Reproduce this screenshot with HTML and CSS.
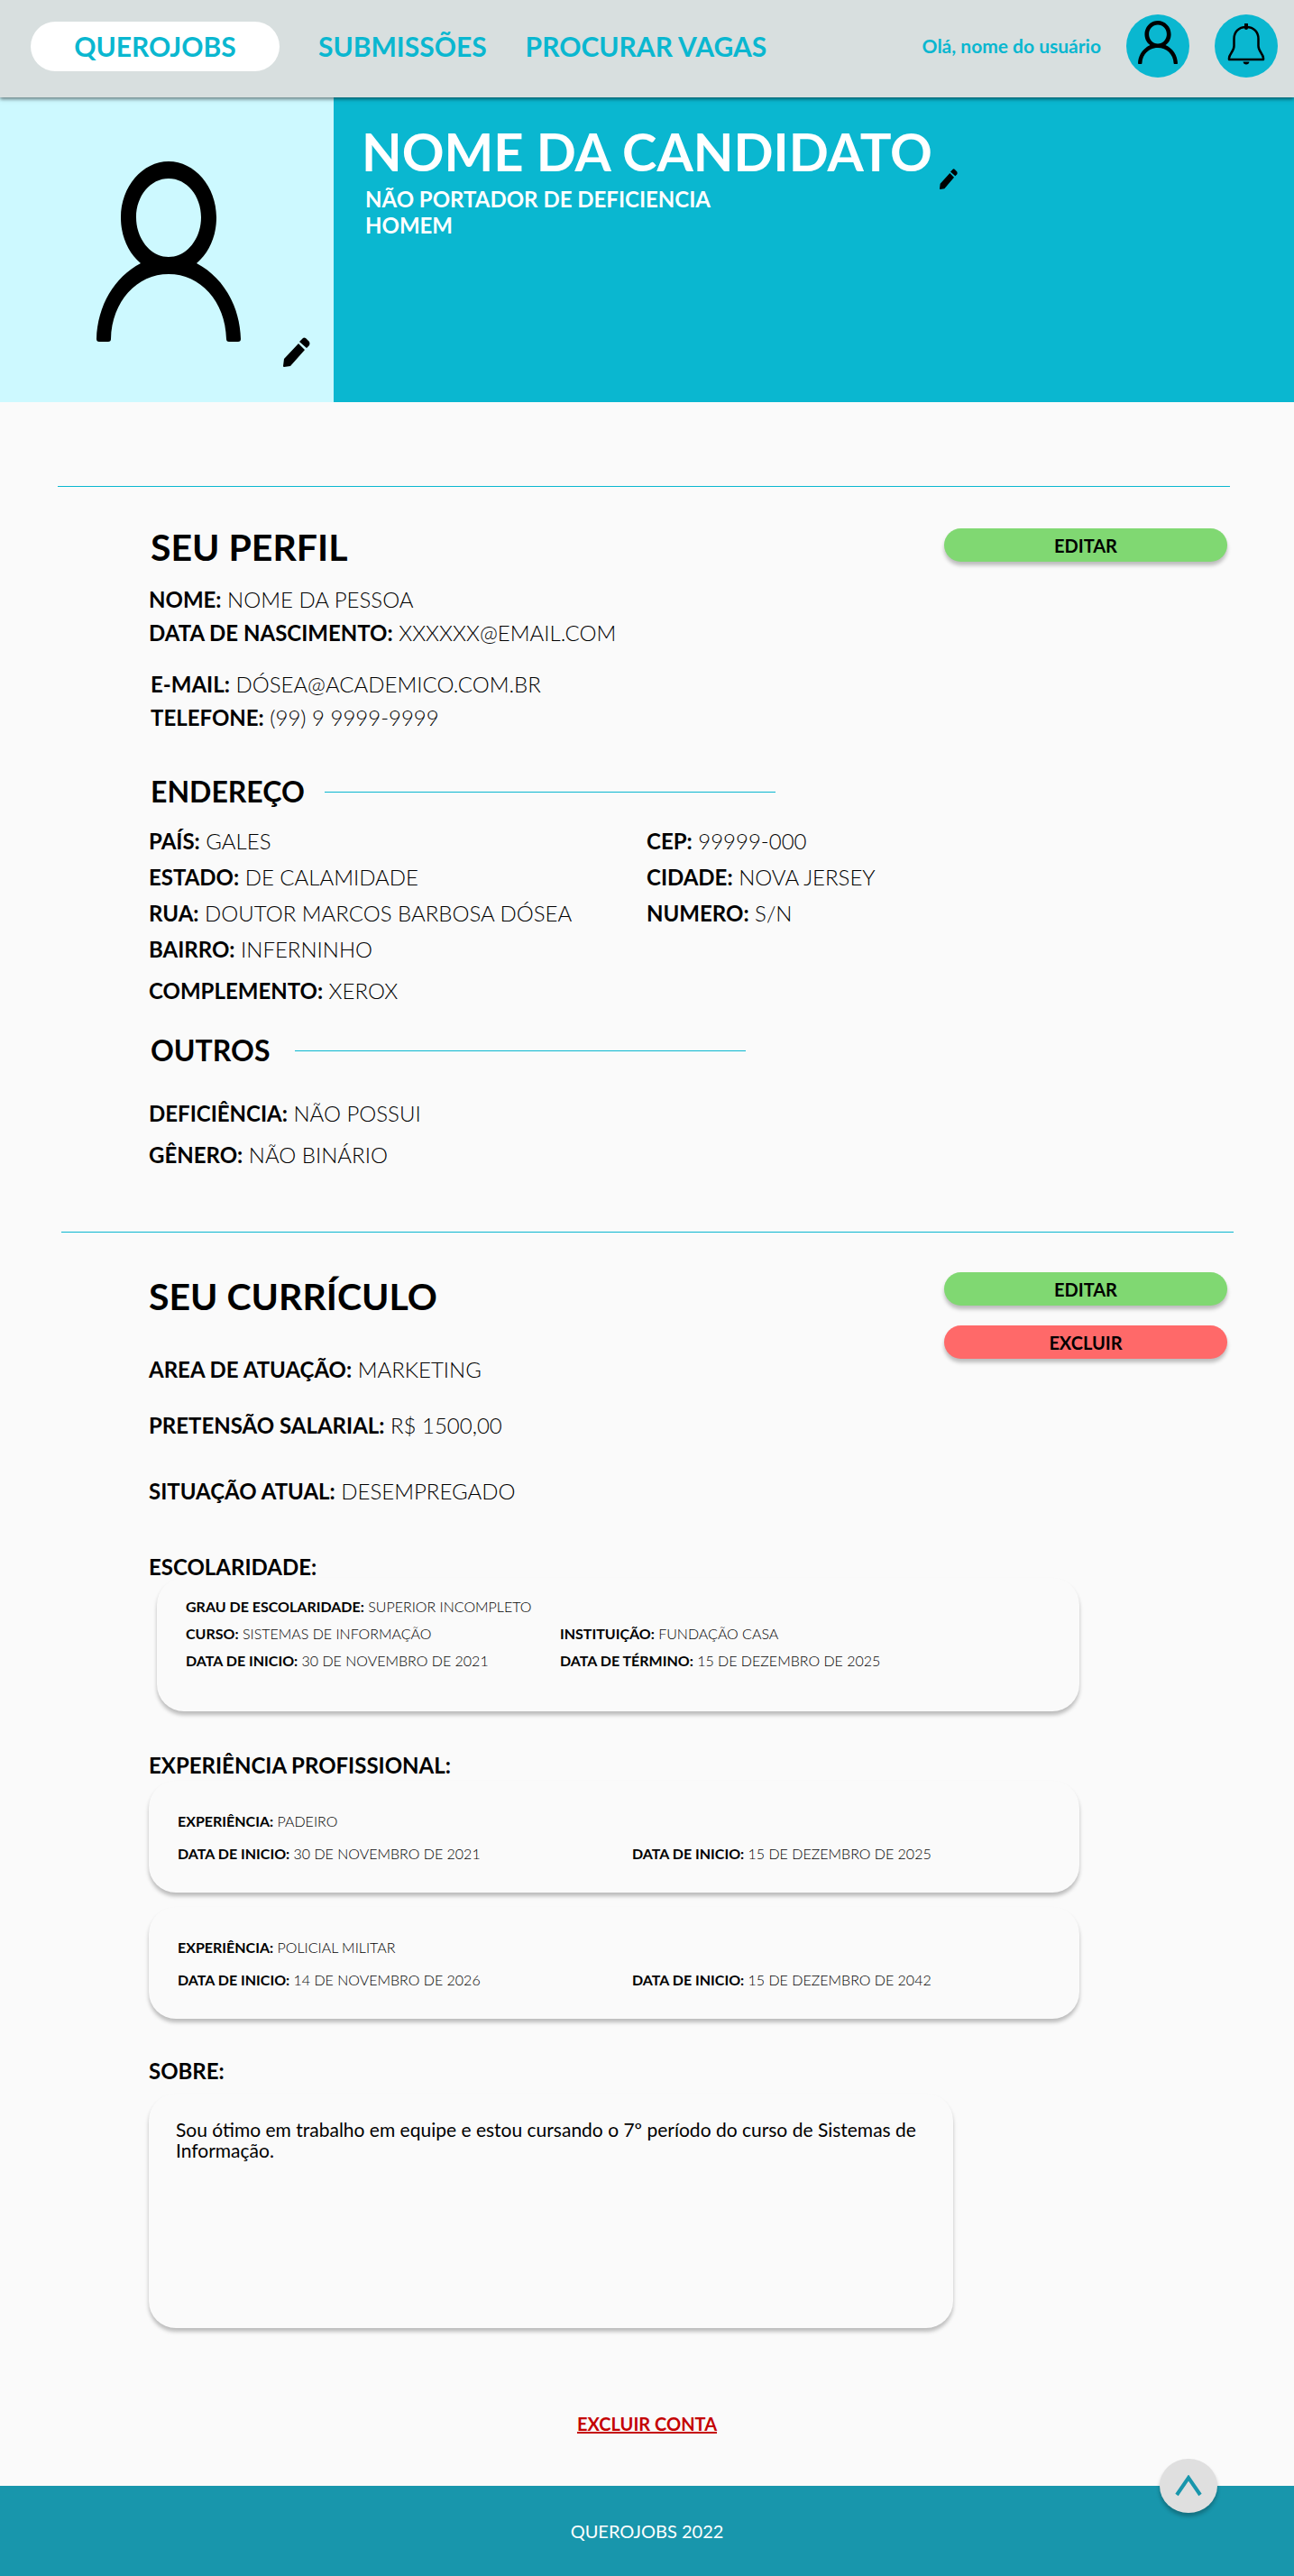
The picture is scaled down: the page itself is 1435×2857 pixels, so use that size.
FILE: index.html
```html
<!DOCTYPE html>
<html lang="pt-BR">
<head>
<meta charset="utf-8">
<meta name="viewport" content="width=device-width, initial-scale=1">
<title>QueroJobs - Perfil do candidato</title>
<link rel="stylesheet" href="styles.css">
</head>
<body>
<svg class="sprite" aria-hidden="true">
  <symbol id="icon-person" viewBox="0 0 160 200" preserveAspectRatio="none">
    <path fill="currentColor" fill-rule="evenodd" d="M80 0C109 0 133 28 133 62C133 83 125 101 111 113C140 128 159 160 160 197Q160 200 157 200H147Q144 200 144 197C143 155 115 125 80 125S17 155 16 197Q16 200 13 200H3Q0 200 0 197C1 160 20 128 49 113C35 101 27 83 27 62C27 28 51 0 80 0ZM80 19C60 19 44 38 44 62S60 106 80 106S116 86 116 62S100 19 80 19Z"/>
  </symbol>
  <symbol id="icon-pencil" viewBox="0 0 30 33" preserveAspectRatio="none">
    <path d="M17 7L24 14L8 32L1 33Q0 33 0 32L1 24ZM18 5L22 1Q23 0 25 1L29 5Q30 7 29 9L26 12Z" fill="currentColor"/>
  </symbol>
</svg>

<header class="topbar" id="top">
  <nav class="nav">
    <a class="brand" href="#top">QUEROJOBS</a>
    <a class="nav-link" href="#submissoes">SUBMISSÕES</a>
    <a class="nav-link" href="#vagas">PROCURAR VAGAS</a>
  </nav>
  <div class="user">
    <span class="greeting">Olá, nome do usuário</span>
    <button class="round" type="button" aria-label="Minha conta">
      <svg class="round-person"><use href="#icon-person"/></svg>
    </button>
    <button class="round" type="button" aria-label="Notificações">
      <svg class="round-bell" viewBox="0 0 42 46" fill="none" stroke="currentColor">
        <path d="M21 4C12 4 7.500 10 7.500 17V25C7.500 31 2 34 2 38.500V40H40V38.500C40 34 34.500 31 34.500 25V17C34.500 10 30 4 21 4Z" stroke-width="2.500" stroke-linejoin="round"/>
        <path d="M21 5V1" stroke-width="4" stroke-linecap="round"/>
        <path d="M17.500 42.500H24.500Q24 45.500 21 45.500T17.500 42.500Z" fill="currentColor" stroke="none"/>
      </svg>
    </button>
  </div>
</header>

<section class="hero">
  <div class="photo">
    <svg class="photo-person"><use href="#icon-person"/></svg>
    <button class="pencil pencil-photo" type="button" aria-label="Editar foto"><svg><use href="#icon-pencil"/></svg></button>
  </div>
  <div class="identity">
    <div class="name-row">
      <h1>NOME DA CANDIDATO</h1>
      <button class="pencil pencil-name" type="button" aria-label="Editar nome"><svg><use href="#icon-pencil"/></svg></button>
    </div>
    <p class="tagline">NÃO PORTADOR DE DEFICIENCIA<br>HOMEM</p>
  </div>
</section>

<main>
  <hr class="divider divider-profile">
  <section class="section profile">
    <div class="section-head">
      <h2>SEU PERFIL</h2>
      <div class="actions"><button class="btn btn-edit" type="button">EDITAR</button></div>
    </div>
    <div class="fields">
      <p><b>NOME:</b> NOME DA PESSOA</p>
      <p><b>DATA DE NASCIMENTO:</b> XXXXXX@EMAIL.COM</p>
    </div>
    <div class="fields contact">
      <p><b>E-MAIL:</b> DÓSEA@ACADEMICO.COM.BR</p>
      <p><b>TELEFONE:</b> (99) 9 9999-9999</p>
    </div>

    <h3 class="rule-title address-title">ENDEREÇO</h3>
    <div class="address">
      <p><b>PAÍS:</b> GALES</p>
      <p><b>CEP:</b> 99999-000</p>
      <p><b>ESTADO:</b> DE CALAMIDADE</p>
      <p><b>CIDADE:</b> NOVA JERSEY</p>
      <p><b>RUA:</b> DOUTOR MARCOS BARBOSA DÓSEA</p>
      <p><b>NUMERO:</b> S/N</p>
      <p><b>BAIRRO:</b> INFERNINHO</p>
    </div>
    <p class="complement"><b>COMPLEMENTO:</b> XEROX</p>

    <h3 class="rule-title others-title">OUTROS</h3>
    <div class="others">
      <p><b>DEFICIÊNCIA:</b> NÃO POSSUI</p>
      <p><b>GÊNERO:</b> NÃO BINÁRIO</p>
    </div>
  </section>

  <hr class="divider divider-resume">
  <section class="section resume">
    <div class="section-head">
      <h2>SEU CURRÍCULO</h2>
      <div class="actions">
        <button class="btn btn-edit" type="button">EDITAR</button>
        <button class="btn btn-delete" type="button">EXCLUIR</button>
      </div>
    </div>
    <p><b>AREA DE ATUAÇÃO:</b> MARKETING</p>
    <p class="salary"><b>PRETENSÃO SALARIAL:</b> R$ 1500,00</p>
    <p class="status"><b>SITUAÇÃO ATUAL:</b> DESEMPREGADO</p>

    <h4 class="school-title">ESCOLARIDADE:</h4>
    <div class="card school">
      <p class="wide"><b>GRAU DE ESCOLARIDADE:</b> SUPERIOR INCOMPLETO</p>
      <p><b>CURSO:</b> SISTEMAS DE INFORMAÇÃO</p>
      <p><b>INSTITUIÇÃO:</b> FUNDAÇÃO CASA</p>
      <p><b>DATA DE INICIO:</b> 30 DE NOVEMBRO DE 2021</p>
      <p><b>DATA DE TÉRMINO:</b> 15 DE DEZEMBRO DE 2025</p>
    </div>

    <h4 class="jobs-title">EXPERIÊNCIA PROFISSIONAL:</h4>
    <div class="jobs">
      <div class="card job">
        <p class="wide"><b>EXPERIÊNCIA:</b> PADEIRO</p>
        <p><b>DATA DE INICIO:</b> 30 DE NOVEMBRO DE 2021</p>
        <p><b>DATA DE INICIO:</b> 15 DE DEZEMBRO DE 2025</p>
      </div>
      <div class="card job">
        <p class="wide"><b>EXPERIÊNCIA:</b> POLICIAL MILITAR</p>
        <p><b>DATA DE INICIO:</b> 14 DE NOVEMBRO DE 2026</p>
        <p><b>DATA DE INICIO:</b> 15 DE DEZEMBRO DE 2042</p>
      </div>
    </div>

    <h4 class="about-title">SOBRE:</h4>
    <div class="card about">
      <p>Sou ótimo em trabalho em equipe e estou cursando o 7º período do curso de Sistemas de Informação.</p>
    </div>
  </section>
  <a class="delete-account" href="#excluir-conta">EXCLUIR CONTA</a>
</main>

<footer class="footer">
  <span>QUEROJOBS 2022</span>
  <a class="to-top" href="#top" aria-label="Voltar ao topo">
    <svg viewBox="0 0 30 24" fill="none" stroke="currentColor" stroke-width="4"><path d="M2 22L15 3L28 22"/></svg>
  </a>
</footer>
</body>
</html>
```

FILE: styles.css
```css
* { box-sizing: border-box; }

body {
  margin: 0;
  background: #fafafa;
  color: #000;
  font-family: Lato, "Open Sans", sans-serif;
  font-size: 24px;
  font-weight: 300;
  line-height: 24px;
}

h1, h2, h3, h4, p { margin: 0; }
b, h1, h2, h3, h4 { font-weight: 700; }
button { padding: 0; border: 0; font: inherit; color: inherit; cursor: pointer; }
a { color: inherit; text-decoration: none; }
svg { display: block; width: 100%; height: 100%; }
.sprite { position: absolute; width: 0; height: 0; }

/* Top bar */
.topbar {
  position: relative;
  z-index: 1;
  display: flex;
  justify-content: space-between;
  height: 108px;
  padding: 16px 18px 0 34px;
  background: #d8dfdf;
  box-shadow: 0 2px 4px rgba(0, 0, 0, .5);
}
.nav {
  display: flex;
  align-items: center;
  gap: 43px;
  height: 70px;
  color: #0ab7d0;
  font-size: 30px;
  font-weight: 700;
}
.brand {
  width: 276px;
  border-radius: 28px;
  background: #fff;
  line-height: 55px;
  text-align: center;
}
.user { display: flex; align-items: center; height: 70px; gap: 28px; }
.greeting { color: #0ab7d0; font-size: 21px; font-weight: 700; }
.round {
  display: grid;
  place-items: center;
  width: 70px;
  height: 70px;
  border-radius: 50%;
  background: #0ab7d0;
}
.round-person { width: 44px; height: 48px; margin-bottom: 8px; }
.round-bell { width: 42px; height: 46px; margin-bottom: 4px; }

/* Hero */
.hero { display: flex; min-height: 338px; background: #0ab7d0; color: #fff; }
.photo { position: relative; flex: 0 0 370px; padding: 71px 0 0 107px; background: #cdf9ff; color: #000; }
.photo-person { width: 160px; height: 200px; }
.pencil { background: none; color: #000; }
.pencil-photo { position: absolute; right: 26px; bottom: 39px; width: 30px; height: 33px; }
.pencil-name { align-self: flex-end; width: 20px; height: 23px; }
.identity { padding: 28px 0 0 31px; }
.name-row { display: flex; align-items: flex-start; gap: 8px; height: 74px; }
h1 { font-size: 58px; line-height: 64px; }
.tagline { padding-left: 4px; margin-top: -4px; font-weight: 700; line-height: 29px; }

/* Sections */
.divider { height: 1px; border: 0; background: #0ab7d0; }
.divider-profile { margin: 93px 71px 46px 64px; }
.divider-resume { margin: 73px 67px 44px 68px; }
.section { padding-left: 165px; }
.section-head { display: flex; justify-content: space-between; padding-right: 74px; }
h2 { font-size: 41px; line-height: 42px; }
h3 { font-size: 32px; line-height: 36px; }
h4 { font-size: 24px; line-height: 24px; }
.profile h2, .profile h3 { padding-left: 2px; }
.actions { display: grid; align-content: start; gap: 22px; width: 314px; }
.btn {
  height: 37px;
  border-radius: 19px;
  box-shadow: 0 4px 4px rgba(0, 0, 0, .25);
  font-size: 20px;
  font-weight: 700;
}
.btn-edit { background: #80d872; }
.btn-delete { background: #ff6969; }

.fields { display: grid; gap: 13px; margin-top: 25px; }
.contact { margin-top: 33px; padding-left: 2px; }
.rule-title { display: flex; align-items: center; gap: 22px; }
.rule-title::after { content: ""; width: 500px; height: 1px; background: #0ab7d0; }
.address-title { margin-top: 52px; }
.address { display: grid; grid-template-columns: 552px 1fr; gap: 16px 0; margin-top: 25px; }
.complement { margin-top: 22px; }
.others-title { margin-top: 36px; gap: 28px; }
.others { display: grid; gap: 22px; margin-top: 40px; }

.resume h2 { padding-top: 6px; }
.salary { margin-top: 38px; }
.status { margin-top: 49px; }
.school-title { margin-top: 60px; }
.jobs-title { margin: 48px 0 5px; }
.about-title { margin: 46px 0 13px; }

/* Cards */
.card {
  margin-right: 238px;
  border-radius: 30px;
  background: #fafafa;
  box-shadow: 0 4px 4px rgba(0, 0, 0, .25);
  font-size: 16px;
  line-height: 20px;
}
.wide { grid-column: 1 / -1; }
.school {
  display: grid;
  grid-template-columns: 415px 1fr;
  row-gap: 10px;
  margin-left: 9px;
  padding: 22px 32px 46px;
}
.jobs { display: grid; gap: 16px; }
.job { display: grid; grid-template-columns: 504px 1fr; row-gap: 16px; padding: 35px 32px 33px; }
.about {
  min-height: 260px;
  margin-right: 378px;
  padding: 28px 16px 28px 30px;
  font-size: 21px;
  font-weight: 400;
  line-height: 23px;
}

.delete-account {
  display: block;
  width: fit-content;
  margin: 94px auto 57px;
  color: #c40000;
  font-size: 20px;
  font-weight: 700;
  text-decoration: underline;
}

/* Footer */
.footer {
  position: relative;
  display: grid;
  place-items: center;
  height: 100px;
  background: #1896ac;
  color: #fff;
  font-size: 20px;
  font-weight: 400;
}
.to-top {
  position: absolute;
  top: -30px;
  right: 85px;
  display: grid;
  place-items: center;
  width: 64px;
  height: 60px;
  border-radius: 50%;
  background: #dfdfdf;
  box-shadow: 0 4px 4px rgba(0, 0, 0, .25);
  color: #1896ac;
}
.to-top svg { width: 30px; height: 24px; }
```
